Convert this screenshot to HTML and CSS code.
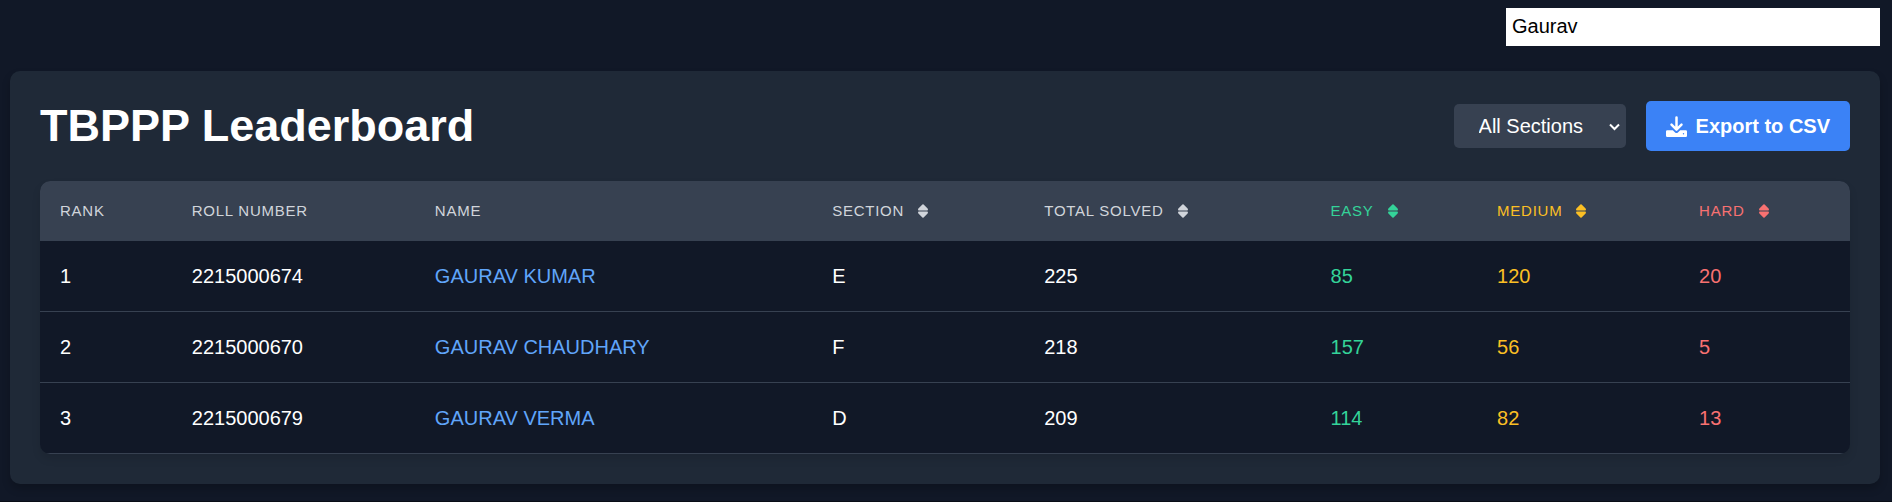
FILE: index.html
```
<!DOCTYPE html>
<html lang="en">
<head>
<meta charset="utf-8">
<title>TBPPP Leaderboard</title>
<meta name="viewport" content="width=device-width, initial-scale=1">
<link rel="stylesheet" href="styles.css">
</head>
<body>
<svg class="sprite" aria-hidden="true">
  <symbol id="sort" viewBox="0 0 10 14"><path d="M4.400.4a.9.9 0 0 1 1.200 0l4 4.200c.7.8.3 1.900-.7 1.900H1.100C.1 6.500-.3 5.400.4 4.600zM4.400 13.600a.9.9 0 0 0 1.200 0l4-4.200c.7-.8.300-1.900-.7-1.900H1.100c-1 0-1.400 1.100-.7 1.900z"/></symbol>
</svg>
<main class="page">
  <div class="search">
    <input class="search-input" type="text" value="Gaurav" aria-label="Search by name">
  </div>
  <section class="card">
    <header class="card-header">
      <h1 class="title">TBPPP Leaderboard</h1>
      <div class="actions">
        <div class="select-wrap">
          <select class="section-select" aria-label="Section">
            <option>All Sections</option>
            <option>D</option>
            <option>E</option>
            <option>F</option>
          </select>
          <svg class="chevron" viewBox="0 0 11 8" aria-hidden="true"><path d="M1 1.500l4.500 4.500L10 1.500"/></svg>
        </div>
        <button class="export" type="button">
          <svg class="export-icon" viewBox="0 0 21 21" aria-hidden="true"><path class="arrow" d="M10.500 1.500v11.500M5.500 8.600l5 5 5-5"/><path d="M1.200 14.200h5.600l2.300 2.200a2 2 0 0 0 2.800 0l2.300-2.200h5.600a1.200 1.200 0 0 1 1.200 1.200v4.400a1.200 1.200 0 0 1-1.200 1.200H1.200a1.200 1.200 0 0 1-1.200-1.200v-4.400a1.200 1.200 0 0 1 1.200-1.200zM17.500 17a.7.7 0 1 0 0 1.400.7.7 0 1 0 0-1.400z"/></svg>
          Export to CSV
        </button>
      </div>
    </header>
    <div class="table-wrap">
      <table class="board">
        <colgroup>
          <col class="col-rank"><col class="col-roll"><col class="col-name"><col class="col-section">
          <col class="col-total"><col class="col-easy"><col class="col-medium"><col class="col-hard">
        </colgroup>
        <thead>
          <tr>
            <th scope="col">Rank</th>
            <th scope="col">Roll Number</th>
            <th scope="col">Name</th>
            <th scope="col"><button class="sort" type="button">Section <svg class="sort-icon" aria-hidden="true"><use href="#sort"/></svg></button></th>
            <th scope="col"><button class="sort" type="button">Total Solved <svg class="sort-icon" aria-hidden="true"><use href="#sort"/></svg></button></th>
            <th scope="col" class="easy"><button class="sort" type="button">Easy <svg class="sort-icon" aria-hidden="true"><use href="#sort"/></svg></button></th>
            <th scope="col" class="medium"><button class="sort" type="button">Medium <svg class="sort-icon" aria-hidden="true"><use href="#sort"/></svg></button></th>
            <th scope="col" class="hard"><button class="sort" type="button">Hard <svg class="sort-icon" aria-hidden="true"><use href="#sort"/></svg></button></th>
          </tr>
        </thead>
        <tbody>
          <tr><td>1</td><td>2215000674</td><td><a class="name" href="#">GAURAV KUMAR</a></td><td>E</td><td>225</td><td class="easy">85</td><td class="medium">120</td><td class="hard">20</td></tr>
          <tr><td>2</td><td>2215000670</td><td><a class="name" href="#">GAURAV CHAUDHARY</a></td><td>F</td><td>218</td><td class="easy">157</td><td class="medium">56</td><td class="hard">5</td></tr>
          <tr><td>3</td><td>2215000679</td><td><a class="name" href="#">GAURAV VERMA</a></td><td>D</td><td>209</td><td class="easy">114</td><td class="medium">82</td><td class="hard">13</td></tr>
        </tbody>
      </table>
    </div>
  </section>
</main>
</body>
</html>
```
FILE: styles.css
```
* {
  box-sizing: border-box;
}

body {
  margin: 0;
  background: #111827;
  color: #fff;
  font-family: "Liberation Sans", Arial, sans-serif;
  font-size: 20px;
  line-height: 30px;
}

.sprite {
  display: none;
}

.page {
  min-height: 100vh;
  padding: 8px 12px 16px 10px;
  border-bottom: 1px solid #090d16;
}

.search {
  display: flex;
  justify-content: flex-end;
  margin-bottom: 25px;
}

.search-input {
  width: 20%;
  height: 38px;
  padding: 0 6px 2px;
  border: 0;
  background: #fff;
  color: #000;
  font: inherit;
}

.card {
  padding: 30px;
  border-radius: 10px;
  background: #1f2937;
  box-shadow: 0 5px 8px rgba(0, 0, 0, 0.2);
}

.card-header {
  display: flex;
  align-items: center;
  justify-content: space-between;
  margin-bottom: 30px;
}

.title {
  margin: 0;
  font-size: 45px;
  line-height: 50px;
  font-weight: 700;
}

.actions {
  display: flex;
  align-items: center;
  gap: 20px;
}

.select-wrap {
  position: relative;
}

.section-select {
  display: block;
  width: 172px;
  height: 44px;
  padding: 0 25px;
  border: 0;
  border-radius: 5px;
  appearance: none;
  background-color: #374151;
  color: #fff;
  font: inherit;
}

.chevron {
  position: absolute;
  top: 19px;
  right: 6px;
  width: 11px;
  height: 8px;
  fill: none;
  stroke: #fff;
  stroke-width: 2;
  pointer-events: none;
}

.export {
  display: flex;
  align-items: center;
  gap: 9px;
  padding: 10px 20px;
  border: 0;
  border-radius: 5px;
  background: #3b82f6;
  color: #fff;
  font: inherit;
  font-weight: 700;
}

.export-icon {
  width: 21px;
  height: 21px;
  fill: currentColor;
}

.arrow {
  fill: none;
  stroke: currentColor;
  stroke-width: 2.5;
  stroke-linecap: round;
  stroke-linejoin: round;
}

.table-wrap {
  overflow: hidden;
  border-radius: 10px;
  box-shadow: 0 5px 8px rgba(0, 0, 0, 0.1);
}

.board {
  width: 100%;
  table-layout: fixed;
  border-collapse: collapse;
  background: #111827;
}

.col-rank { width: 7.28%; }
.col-roll { width: 13.43%; }
.col-name { width: 21.95%; }
.col-section { width: 11.72%; }
.col-total { width: 15.82%; }
.col-easy { width: 9.2%; }
.col-medium { width: 11.16%; }
.col-hard { width: 9.44%; }

th {
  padding: 20px;
  background: #374151;
  color: #d1d5db;
  font-size: 15px;
  line-height: 20px;
  font-weight: 400;
  letter-spacing: 0.05em;
  text-align: left;
  text-transform: uppercase;
}

td {
  padding: 20px;
  box-shadow: inset 0 -1px #374151;
  line-height: 31px;
}

.sort {
  display: flex;
  align-items: center;
  gap: 14px;
  padding: 0;
  border: 0;
  background: none;
  color: inherit;
  font: inherit;
  letter-spacing: inherit;
  text-transform: inherit;
}

.sort-icon {
  width: 10px;
  height: 14px;
  fill: currentColor;
}

.name {
  color: #60a5fa;
  text-decoration: none;
}

th.easy, .easy { color: #34d399; }
th.medium, .medium { color: #fbbf24; }
th.hard, .hard { color: #f87171; }
```
